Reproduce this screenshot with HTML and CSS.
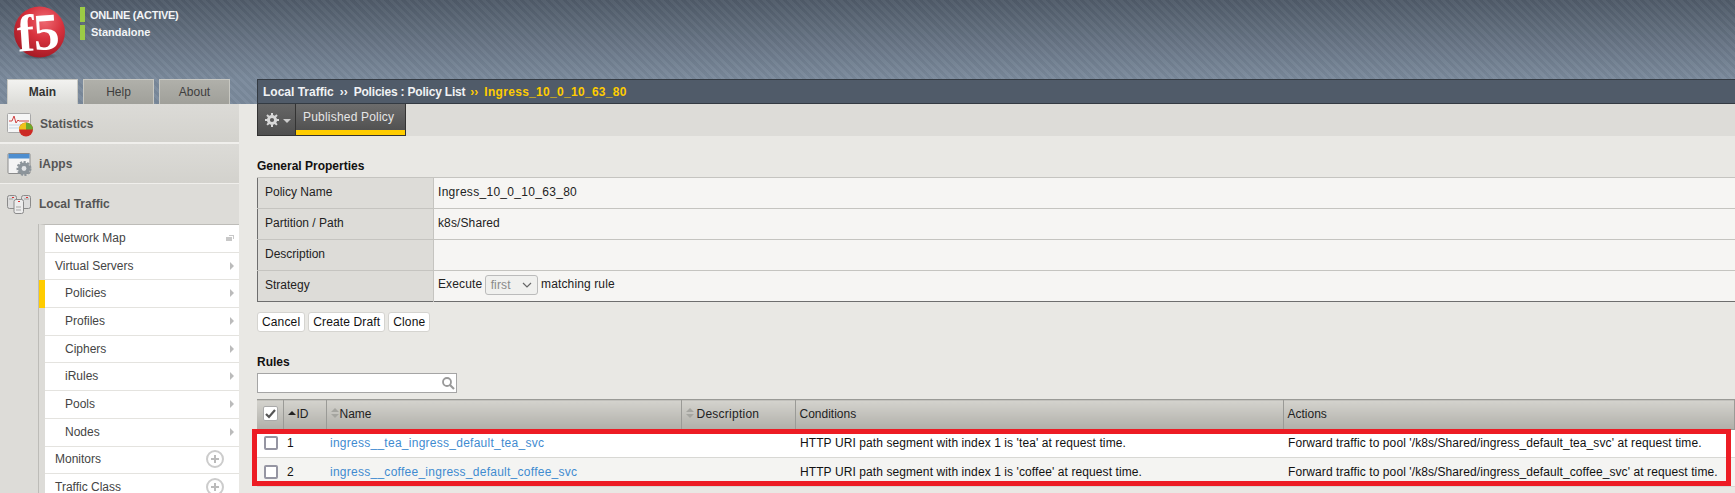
FILE: index.html
```html
<!DOCTYPE html>
<html lang="en">
<head>
<meta charset="utf-8">
<title>Policy</title>
<link rel="stylesheet" href="styles.css">
</head>
<body>
<header class="banner">
  <svg class="logo" width="72" height="66" viewBox="0 0 72 66">
    <defs>
      <radialGradient id="ball" cx="0.6" cy="0.28" r="0.78">
        <stop offset="0" stop-color="#ee6a72"/>
        <stop offset="0.45" stop-color="#d8323e"/>
        <stop offset="1" stop-color="#a01722"/>
      </radialGradient>
      <radialGradient id="shade" cx="0.5" cy="0.5" r="0.5">
        <stop offset="0" stop-color="#2a2f38" stop-opacity="0.75"/>
        <stop offset="1" stop-color="#2a2f38" stop-opacity="0"/>
      </radialGradient>
    </defs>
    <ellipse cx="39" cy="56" rx="21" ry="3.5" fill="url(#shade)"/>
    <circle cx="39.5" cy="32" r="25.5" fill="url(#ball)"/>
    <text class="logo-text" x="17" y="50" transform="rotate(-4 39 32)">f5</text>
  </svg>
  <div class="status">
    <div class="status-row"><span class="led"></span><span>ONLINE (ACTIVE)</span></div>
    <div class="status-row status-row-b"><span class="led"></span><span>Standalone</span></div>
  </div>
  <nav class="tabs">
    <span class="tab tab-on">Main</span>
    <span class="tab">Help</span>
    <span class="tab">About</span>
  </nav>
</header>
<div class="shell">
  <aside class="side">
    <div class="sec sec-stat">
      <svg class="sec-icon" width="28" height="26" viewBox="0 0 28 26">
        <rect x="1.5" y="2.5" width="23" height="19" rx="1" fill="#f6f6f6" stroke="#a8a8a8"/>
        <path d="M3 10h3l2-5 2 7 2-3 1 1h10" fill="none" stroke="#cf4040" stroke-width="1"/>
        <path d="M3 14h20M3 17h20" stroke="#c4d4e4" stroke-width="1"/>
        <circle cx="20" cy="18.5" r="7" fill="#cc2a24"/>
        <path d="M20 18.5V11.5A7 7 0 0 1 27 18.5Z" fill="#6cab2c"/>
        <path d="M20 18.5H13A7 7 0 0 1 20 11.5Z" fill="#eec21c"/>
      </svg>
      <span>Statistics</span>
    </div>
    <div class="sec sec-apps">
      <svg class="sec-icon" width="28" height="26" viewBox="0 0 28 26">
        <rect x="2" y="2.5" width="22" height="20" rx="1" fill="#f4f4f4" stroke="#8b8b8b"/>
        <rect x="2.5" y="3" width="21" height="4.5" fill="#4d8ed0"/>
        <circle cx="18" cy="17.5" r="6" fill="#8d959b" stroke="#8d959b" stroke-dasharray="2 1.4" stroke-width="3"/>
        <circle cx="18" cy="17.5" r="2.4" fill="#e2e4e6"/>
      </svg>
      <span>iApps</span>
    </div>
    <div class="sec sec-local">
      <svg class="sec-icon" width="28" height="26" viewBox="0 0 28 26">
        <rect x="1.5" y="4.5" width="9" height="13" rx="2" fill="#dcdcdc" stroke="#8a8a8a"/>
        <rect x="15.5" y="4.5" width="9" height="13" rx="2" fill="#dcdcdc" stroke="#8a8a8a"/>
        <rect x="8" y="8.5" width="9.5" height="14" rx="2" fill="#ececec" stroke="#8a8a8a"/>
        <path d="M10 16h5M10 19h5M3 8h4M18 8h5" stroke="#a5a5a5"/>
        <path d="M6 6h2v1H6zM20 6h2v1h-2zM12 10h2v1h-2z" fill="#d33"/>
      </svg>
      <span>Local Traffic</span>
    </div>
    <ul class="menu">
      <li class="mi"><span>Network Map</span><svg class="mi-win" width="8" height="6" viewBox="0 0 8 6"><path d="M3 0h5v4H7V1H3zM0 2h6v4H0z" fill="#c8c8c8"/></svg></li>
      <li class="mi"><span>Virtual Servers</span><i class="arrow"></i></li>
      <li class="mi mi-sub mi-on"><span>Policies</span><i class="arrow"></i></li>
      <li class="mi mi-sub"><span>Profiles</span><i class="arrow"></i></li>
      <li class="mi mi-sub"><span>Ciphers</span><i class="arrow"></i></li>
      <li class="mi mi-sub"><span>iRules</span><i class="arrow"></i></li>
      <li class="mi mi-sub"><span>Pools</span><i class="arrow"></i></li>
      <li class="mi mi-sub"><span>Nodes</span><i class="arrow"></i></li>
      <li class="mi"><span>Monitors</span><i class="plus"></i></li>
      <li class="mi"><span>Traffic Class</span><i class="plus"></i></li>
    </ul>
  </aside>
  <main class="content">
    <div class="crumb">
      <span>Local Traffic</span><span class="sep">››</span><span class="crumb-mid">Policies : Policy List</span><span class="sep sep-y">››</span><span class="crumb-cur">Ingress_10_0_10_63_80</span>
    </div>
    <div class="subbar">
      <div class="gear-tab">
        <svg width="14" height="14" viewBox="0 0 14 14"><circle cx="7" cy="7" r="3.6" fill="none" stroke="#d8d8d8" stroke-width="3"/><path d="M7 0v14M0 7h14M2 2l10 10M12 2 2 12" stroke="#d8d8d8" stroke-width="2" stroke-dasharray="2.6 8.8 2.6"/></svg>
        <i class="caret"></i>
      </div>
      <div class="pub-tab">Published Policy</div>
    </div>
    <div class="body">
      <h2 class="title">General Properties</h2>
      <table class="props">
        <tr><th>Policy Name</th><td class="val-name">Ingress_10_0_10_63_80</td></tr>
        <tr><th>Partition / Path</th><td>k8s/Shared</td></tr>
        <tr><th>Description</th><td></td></tr>
        <tr><th>Strategy</th><td>Execute <span class="sel">first<svg width="10" height="6" viewBox="0 0 10 6"><path d="M1 1l4 4 4-4" fill="none" stroke="#666" stroke-width="1.2"/></svg></span> matching rule</td></tr>
      </table>
      <div class="btns">
        <span class="btn">Cancel</span><span class="btn">Create Draft</span><span class="btn">Clone</span>
      </div>
      <h2 class="title">Rules</h2>
      <div class="search">
        <svg width="14" height="14" viewBox="0 0 14 14"><circle cx="6" cy="6" r="4" fill="none" stroke="#999" stroke-width="1.8"/><path d="M9 9l4 4" stroke="#999" stroke-width="2.2"/></svg>
      </div>
      <div class="rules-wrap">
        <table class="rules">
          <colgroup><col class="c1"><col class="c2"><col class="c3"><col class="c4"><col class="c5"><col></colgroup>
          <thead>
            <tr>
              <th><span class="cb cb-head"><svg width="11" height="10" viewBox="0 0 11 10"><path d="M1 5l3 3 6-7" fill="none" stroke="#555" stroke-width="2.2"/></svg></span></th>
              <th><i class="sort-up"></i>ID</th>
              <th><i class="sort"></i>Name</th>
              <th class="th-desc"><i class="sort"></i>Description</th>
              <th>Conditions</th>
              <th>Actions</th>
            </tr>
          </thead>
          <tbody>
            <tr>
              <td><span class="cb"></span></td><td>1</td>
              <td class="link">ingress__tea_ingress_default_tea_svc</td><td></td>
              <td class="txt">HTTP URI path segment with index 1 is 'tea' at request time.</td>
              <td class="txt">Forward traffic to pool '/k8s/Shared/ingress_default_tea_svc' at request time.</td>
            </tr>
            <tr class="alt">
              <td><span class="cb"></span></td><td>2</td>
              <td class="link">ingress__coffee_ingress_default_coffee_svc</td><td></td>
              <td class="txt">HTTP URI path segment with index 1 is 'coffee' at request time.</td>
              <td class="txt">Forward traffic to pool '/k8s/Shared/ingress_default_coffee_svc' at request time.</td>
            </tr>
          </tbody>
        </table>
        <div class="redbox"></div>
      </div>
    </div>
  </main>
</div>
</body>
</html>
```
FILE: styles.css
```css
* { box-sizing: border-box; }
html, body { margin: 0; padding: 0; }
body {
  width: 1735px; height: 493px; overflow: hidden;
  font-family: "Liberation Sans", Arial, sans-serif; font-size: 12px; color: #222;
  background: #e9e8e4;
}
.banner {
  position: relative; height: 104px;
  background:
    repeating-linear-gradient(45deg, rgba(255,255,255,.03) 0 3px, rgba(0,0,0,.03) 3px 6px),
    linear-gradient(#505b69 0, #7b8a9c 79px, #7b8a9c 104px);
}
.logo { position: absolute; left: 0; top: 0; }
.logo-text { font-family: "Liberation Serif", serif; font-weight: 700; font-size: 52px; letter-spacing: -1px; fill: #fff; }
.status { position: absolute; left: 80px; top: 7px; color: #f2f4f6; font-weight: 700; font-size: 11px; letter-spacing: -.25px; }
.status-row { display: flex; align-items: center; gap: 5px; height: 15px; margin-bottom: 3px; }
.status-row-b { gap: 6px; letter-spacing: 0; }
.status-row-b span:last-child { position: relative; top: -1px; }
.led { width: 5px; height: 15px; background: #9ccb45; }
.tabs { position: absolute; left: 7px; bottom: 0; display: flex; gap: 5px; }
.tab {
  width: 71px; height: 25px; display: flex; align-items: center; justify-content: center;
  background: linear-gradient(#b0b0aa, #a0a09a); color: #3e3e3e; border: 1px solid #c8c8c2; border-bottom: 0;
}
.tab-on { background: linear-gradient(#f2f2f0, #dcdcd8); font-weight: 700; color: #333; }
.shell { display: flex; height: 389px; }
.side { width: 239px; flex: none; background: #dddcd8; }
.sec {
  height: 40px; display: flex; align-items: center; padding-left: 6px; gap: 5px;
  color: #555; font-weight: 700; font-size: 12px;
}
.sec-stat, .sec-apps { background: linear-gradient(#dcdbd7, #d3d2cd); border-bottom: 2px solid #f0efec; padding-top: 2px; }
.sec-stat { gap: 6px; }
.sec-apps { border-bottom: 1px solid #f0efec; padding-top: 1px; }
.sec-icon { flex: none; }
.menu {
  list-style: none; margin: 0 0 0 39px; padding: 0; background: #fff;
  border-left: 6px solid #dddcd8; box-shadow: -1px 0 0 #bdbcb8; border-top: 1px solid #bdbcb8;
}
.mi {
  height: 27.7px; display: flex; align-items: center; justify-content: space-between;
  padding: 0 5px 1px 10px; border-bottom: 1px solid #e4e3df; color: #444; position: relative;
}
.mi-sub { padding-left: 20px; }
.mi-on::before { content: ""; position: absolute; left: -6px; top: 0; bottom: -1px; width: 6px; background: #fc0; }
.arrow { width: 0; height: 0; border-left: 4px solid #bbb; border-top: 4px solid transparent; border-bottom: 4px solid transparent; }
.plus {
  width: 18px; height: 18px; border: 2px solid #ccc; border-radius: 50%; margin-right: 10px;
  background: linear-gradient(#bbb, #bbb) center/8px 2px no-repeat, linear-gradient(#bbb, #bbb) center/2px 8px no-repeat;
}
.content { flex: 1; min-width: 0; margin-top: -25px; margin-left: 18px; position: relative; }
.crumb {
  height: 25px; background: #505b69; border: 1px solid #333a42; border-right: 0;
  color: #f0f2f4; font-weight: 700; display: flex; align-items: center; padding-left: 5px;
}
.sep { margin: 0 6px; }
.sep-y { color: #fc0; margin: 0 6px 0 5px; }
.crumb-mid { letter-spacing: -.2px; }
.crumb-cur { color: #fc0; letter-spacing: .3px; }
.subbar { display: flex; height: 32px; background: #dddcd8; }
.gear-tab {
  width: 39px; background: linear-gradient(#666, #4f4f4f); border: 1px solid #333; border-top: 0;
  display: flex; align-items: center; gap: 4px; padding-left: 7px;
}
.caret { width: 0; height: 0; border-top: 4px solid #ccc; border-left: 4px solid transparent; border-right: 4px solid transparent; margin-top: 2px; }
.pub-tab {
  width: 110px; background: linear-gradient(#6c6c6c, #4c4c4c); color: #e6e6e6; letter-spacing: .2px;
  border: 1px solid #333; border-top: 0; border-left: 0; box-shadow: inset 0 -5px 0 #fc0;
  padding: 6px 0 0 7px;
}
.title { margin: 0; font-size: 12px; font-weight: 700; color: #111; line-height: 14px; padding-top: 23px; height: 41px; }
.props { border-collapse: collapse; width: 100%; border: 1px solid #6e6e6e; border-right: 0; }
.props th, .props td { height: 31px; padding: 0 5px 2px 7px; font-weight: 400; text-align: left; border-top: 1px solid #c5c4c0; color: #222; }
.props th { width: 176px; background: #dddcd8; border-right: 1px solid #c5c4c0; }
.props td { background: #f6f5f3; padding-left: 4px; letter-spacing: .12px; }
.props .val-name { letter-spacing: .3px; }
.sel {
  display: inline-flex; align-items: center; justify-content: space-between; width: 53px; height: 20px; margin-left: -1px;
  border: 1px solid #bbb; border-radius: 3px; padding: 0 5px; color: #8a8a8a; vertical-align: middle; background: #f0f0ee;
}
.btns { display: flex; gap: 3px; margin-top: 10px; }
.btn {
  height: 20px; padding: 0 4px; background: #fff; border: 1px solid #d5d4d0; border-radius: 3px;
  display: flex; align-items: center; color: #111; letter-spacing: .14px;
}
.search {
  width: 200px; height: 20px; background: #fff; border: 1px solid #a5a5a5; display: flex; align-items: center; justify-content: flex-end; padding-right: 1px;
}
.rules-wrap { position: relative; margin-top: 6px; }
.rules { border-collapse: collapse; width: 100%; table-layout: fixed; }
.c1 { width: 26px; } .c2 { width: 43px; } .c3 { width: 355px; } .c4 { width: 114px; } .c5 { width: 488px; }
.rules th {
  height: 30px; background: linear-gradient(#d4d3ce, #b0afa9); border: 1px solid #9a9a96; border-width: 1px 1px 1px 0;
  text-align: left; font-weight: 400; padding: 0 4px 2px; color: #222; white-space: nowrap;
}
.rules .th-desc { letter-spacing: .25px; }
.rules td { height: 28px; padding: 0 4px 1px; white-space: nowrap; background: #fff; border-bottom: 1px solid #d8d8d4; color: #111; }
.rules .alt td { background: #f4f4f2; height: 29px; padding-bottom: 0; }
.rules .txt { padding-left: 5px; letter-spacing: .09px; }
.rules .link { color: #3f8bd0; letter-spacing: .26px; }
.cb {
  display: block; width: 14px; height: 14px; border: 2px solid #9595a2; border-radius: 2px; background: #fff; margin-left: 3px;
}
.cb-head { display: flex; align-items: center; justify-content: center; width: 15px; height: 15px; border: 1px solid #aaa; margin-left: 2px; }
.sort-up, .sort { display: inline-block; position: relative; width: 8px; margin-right: 1px; height: 8px; }
.th-desc .sort { margin-right: 3px; }
.sort-up::before { content: ""; position: absolute; left: 0; top: 1px; border: 4px solid transparent; border-top: 0; border-bottom: 4px solid #222; }
.sort::before { content: ""; position: absolute; left: 0; top: -2px; border: 4px solid transparent; border-top: 0; border-bottom: 4px solid #a5a5a0; }
.sort::after { content: ""; position: absolute; left: 0; top: 4px; border: 4px solid transparent; border-bottom: 0; border-top: 4px solid #a5a5a0; }
.redbox { position: absolute; left: -5px; right: 4px; top: 30px; height: 57px; border: 5px solid #ed1c24; pointer-events: none; }
```
